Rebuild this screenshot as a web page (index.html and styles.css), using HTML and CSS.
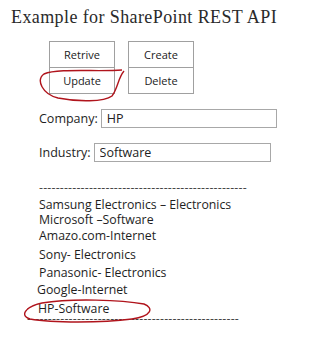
FILE: index.html
```html
<!DOCTYPE html>
<html lang="en">
<head>
  <meta charset="UTF-8">
  <title>SharePoint REST API</title>
  <link rel="stylesheet" href="styles.css">
</head>
<body>

<h2 class="title">Example for SharePoint REST API</h2>

<div class="btn-grid">
  <button>Retrive</button>
  <button>Create</button>
  <button>Update</button>
  <button>Delete</button>
</div>

<div class="field company">
  <label for="company">Company:</label>
  <input type="text" id="company" value="HP">
</div>

<div class="field industry">
  <label for="industry">Industry:</label>
  <input type="text" id="industry" value="Software">
</div>

<div class="results">
  <div class="dash">--------------------------------------------------</div>
  <div class="item i1">Samsung Electronics – Electronics</div>
  <div class="item i2">Microsoft –Software</div>
  <div class="item">Amazo.com-Internet</div>
  <div class="item i4">Sony- Electronics</div>
  <div class="item i5">Panasonic- Electronics</div>
  <div class="item i6">Google-Internet</div>
  <div class="item i7">HP-Software</div>
  <div class="dash bottom">---------------------------------------------------</div>
</div>

<!-- red pen marks from the screenshot -->
<svg class="mark mark-update" width="90" height="36" viewBox="0 0 90 36">
  <path d="M84 2 C60 4 20 0 6 6 C-2 12 4 26 20 30 C40 34 66 34 74 28 C80 20 80 10 86 3" fill="none" stroke="#b0141c" stroke-width="1.4"/>
</svg>
<svg class="mark mark-hp" width="132" height="26" viewBox="0 0 132 26">
  <path d="M20 4 C50 -1 100 1 122 5 C132 9 130 17 110 20 C80 24 30 24 8 20 C-2 17 2 8 20 4" fill="none" stroke="#b0141c" stroke-width="1.4"/>
</svg>

</body>
</html>
```

FILE: styles.css
```css
body { margin: 0; padding: 0; background: #fff; color: #1e1e1e; font-family: "Open Sans", sans-serif; font-size: 12.3px; position: relative; width: 318px; height: 340px; overflow: hidden; }
.title { font-family: "Liberation Serif", serif; font-weight: normal; font-size: 18px; letter-spacing: 0.4px; color: #2a2a2a; margin: 0; padding: 8px 0 0 11px; line-height: 18px; }

.btn-grid { display: grid; grid-template-columns: 66px 66px; column-gap: 13px; margin: 15px 0 0 49px; }
.btn-grid button { height: 27px; background: #fff; border: 1px solid #a0a0a0; font-family: "Open Sans", sans-serif; font-size: 11px; color: #222; padding: 0; }
.btn-grid button:nth-child(n+3) { border-top: none; height: 26px; }

.field { display: flex; align-items: center; margin-left: 39px; }
.field label { margin-right: 3px; font-size: 12.5px; }
.field input { height: 19px; box-sizing: border-box; border: 1px solid #a8a8a8; padding: 0 5px; font-family: "Open Sans", sans-serif; font-size: 12.5px; color: #222; }
.company { margin-top: 15px; }
.company input { width: 176px; }
.industry { margin-top: 15px; }
.industry input { width: 177px; }

.results { margin: 21px 0 0 39px; }
.dash { line-height: 10px; height: 10px; color: #444; letter-spacing: 0.2px; white-space: nowrap; }
.item { line-height: 16px; height: 16px; }
.i1 { margin-top: 4px; line-height: 15px; height: 15px; }
.i4 { margin-top: 3px; }
.i5 { margin-top: 2px; }
.i6 { margin-top: 1px; margin-left: -2px; }
.i7 { margin-top: 4px; margin-left: -1px; line-height: 14px; height: 14px; }
.bottom { margin-left: -12px; line-height: 6px; height: 6px; }

.mark { position: absolute; }
.mark-update { left: 38px; top: 68px; }
.mark-hp { left: 22px; top: 299px; }
```
